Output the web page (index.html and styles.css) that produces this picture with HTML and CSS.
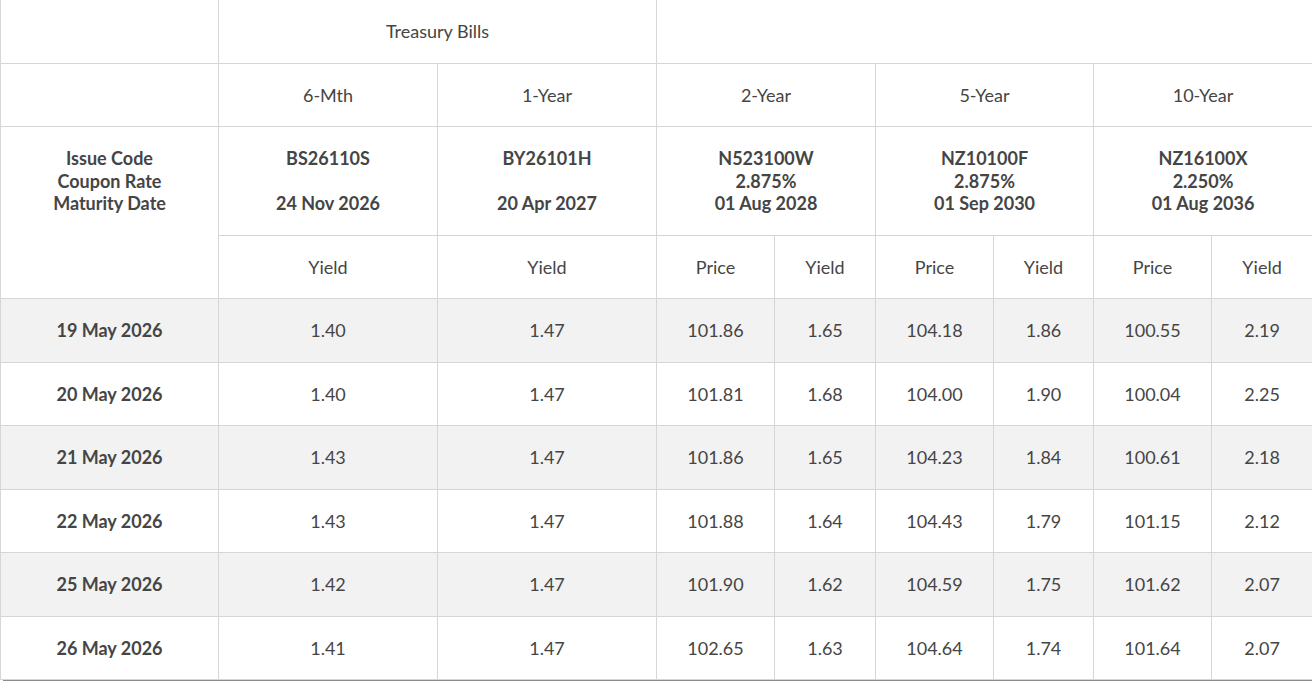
FILE: index.html
```html
<!DOCTYPE html>
<html>
<head>
<meta charset="utf-8">
<link rel="stylesheet" href="styles.css">
</head>
<body>
<div class="wrap">
<table class="rates">
  <colgroup>
    <col class="c-label">
    <col class="c-bill">
    <col class="c-bill">
    <col class="c-price">
    <col class="c-yield">
    <col class="c-price">
    <col class="c-yield2">
    <col class="c-price">
    <col class="c-yield">
  </colgroup>
  <thead>
    <tr class="r-top">
      <td></td>
      <td colspan="2">Treasury Bills</td>
      <td colspan="6"></td>
    </tr>
    <tr class="r-tenor">
      <td></td>
      <td>6-Mth</td>
      <td>1-Year</td>
      <td colspan="2">2-Year</td>
      <td colspan="2">5-Year</td>
      <td colspan="2">10-Year</td>
    </tr>
    <tr class="r-issue">
      <th rowspan="2" class="issue-label">Issue Code<br>Coupon Rate<br>Maturity Date</th>
      <th>BS26110S<br><br>24 Nov 2026</th>
      <th>BY26101H<br><br>20 Apr 2027</th>
      <th colspan="2">N523100W<br>2.875%<br>01 Aug 2028</th>
      <th colspan="2">NZ10100F<br>2.875%<br>01 Sep 2030</th>
      <th colspan="2">NZ16100X<br>2.250%<br>01 Aug 2036</th>
    </tr>
    <tr class="r-sub">
      <td>Yield</td>
      <td>Yield</td>
      <td>Price</td>
      <td>Yield</td>
      <td>Price</td>
      <td>Yield</td>
      <td>Price</td>
      <td>Yield</td>
    </tr>
  </thead>
  <tbody>
    <tr class="odd"><th>19 May 2026</th><td>1.40</td><td>1.47</td><td>101.86</td><td>1.65</td><td>104.18</td><td>1.86</td><td>100.55</td><td>2.19</td></tr>
    <tr><th>20 May 2026</th><td>1.40</td><td>1.47</td><td>101.81</td><td>1.68</td><td>104.00</td><td>1.90</td><td>100.04</td><td>2.25</td></tr>
    <tr class="odd"><th>21 May 2026</th><td>1.43</td><td>1.47</td><td>101.86</td><td>1.65</td><td>104.23</td><td>1.84</td><td>100.61</td><td>2.18</td></tr>
    <tr><th>22 May 2026</th><td>1.43</td><td>1.47</td><td>101.88</td><td>1.64</td><td>104.43</td><td>1.79</td><td>101.15</td><td>2.12</td></tr>
    <tr class="odd"><th>25 May 2026</th><td>1.42</td><td>1.47</td><td>101.90</td><td>1.62</td><td>104.59</td><td>1.75</td><td>101.62</td><td>2.07</td></tr>
    <tr><th>26 May 2026</th><td>1.41</td><td>1.47</td><td>102.65</td><td>1.63</td><td>104.64</td><td>1.74</td><td>101.64</td><td>2.07</td></tr>
  </tbody>
</table>
<div class="scroll-edge"></div>
</div>
</body>
</html>
```

FILE: styles.css
```css
html, body {
  margin: 0;
  padding: 0;
  background: #ffffff;
}

body {
  font-family: "Lato", "Open Sans", sans-serif;
  color: #454545;
  font-size: 18px;
}

.wrap {
  width: 1312px;
  overflow: hidden;
}

.rates {
  border-collapse: collapse;
  table-layout: fixed;
  width: 1312px;
}

.c-label { width: 218px; }
.c-bill { width: 219px; }
.c-price { width: 118px; }
.c-yield { width: 101px; }
.c-yield2 { width: 100px; }

.rates td,
.rates th {
  border: 1px solid #d6d6d6;
  padding: 0;
  text-align: center;
  vertical-align: middle;
  line-height: 22.5px;
  font-size: 18px;
}

.rates td {
  font-weight: 400;
}

.rates th {
  font-weight: 700;
}

.r-top td {
  border-top: none;
  height: 63px;
}

.r-tenor td {
  height: 62px;
}

.r-issue th {
  height: 108px;
}

.r-issue th.issue-label {
  vertical-align: top;
  padding-top: 20px;
}

.r-sub td {
  height: 62px;
}

.rates tbody td,
.rates tbody th {
  height: 62.5px;
}

.rates tbody tr.odd {
  background: #f2f2f2;
}

.scroll-edge {
  height: 1px;
  margin-left: 3px;
  background: #8c8c8c;
}
```
